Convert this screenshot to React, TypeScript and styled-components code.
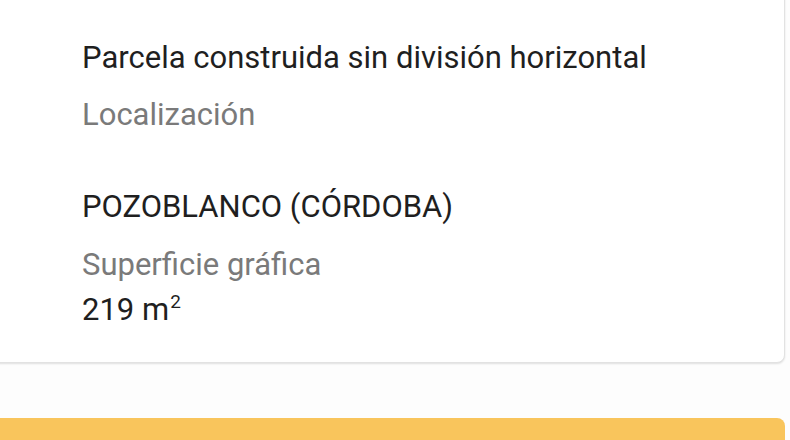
import React from "react";
import styled, { createGlobalStyle } from "styled-components";

const Global = createGlobalStyle`
  html, body { margin: 0; padding: 0; background: #fdfdfd; }
  body { width: 790px; height: 440px; overflow: hidden; font-family: Roboto, "Noto Sans", sans-serif; }
`;

const Page = styled.div`
  display: flex;
  flex-direction: column;
  gap: 55px;
  padding-right: 5px;
  margin-left: -10px;
  margin-top: -20px;
`;

const Card = styled.section`
  background: #ffffff;
  border: 1px solid #e2e2e2;
  border-radius: 8px;
  box-shadow: 0 1px 2px rgba(0, 0, 0, 0.12);
  padding: 59px 20px 34px 91px;
  display: flex;
  flex-direction: column;
`;

const Line = styled.div<{ $muted?: boolean; $gap?: number }>`
  font-size: 31px;
  line-height: 36px;
  color: ${(p) => (p.$muted ? "#7a7a7a" : "#1f1f1f")};
  margin-top: ${(p) => p.$gap ?? 0}px;
`;

const Sup = styled.sup`
  font-size: 19px;
  vertical-align: 12px;
  line-height: 0;
  margin-left: 1px;
`;

const Action = styled.div`
  height: 40px;
  background: #f9c55c;
  border-radius: 8px 8px 0 0;
`;

export default function App() {
  return (
    <>
      <Global />
      <Page>
        <Card>
          <Line>Parcela construida sin división horizontal</Line>
          <Line $muted $gap={21}>Localización</Line>
          <Line $gap={56}>POZOBLANCO (CÓRDOBA)</Line>
          <Line $muted $gap={22}>Superficie gráfica</Line>
          <Line $gap={9}>
            219 m<Sup>2</Sup>
          </Line>
        </Card>
        <Action />
      </Page>
    </>
  );
}
